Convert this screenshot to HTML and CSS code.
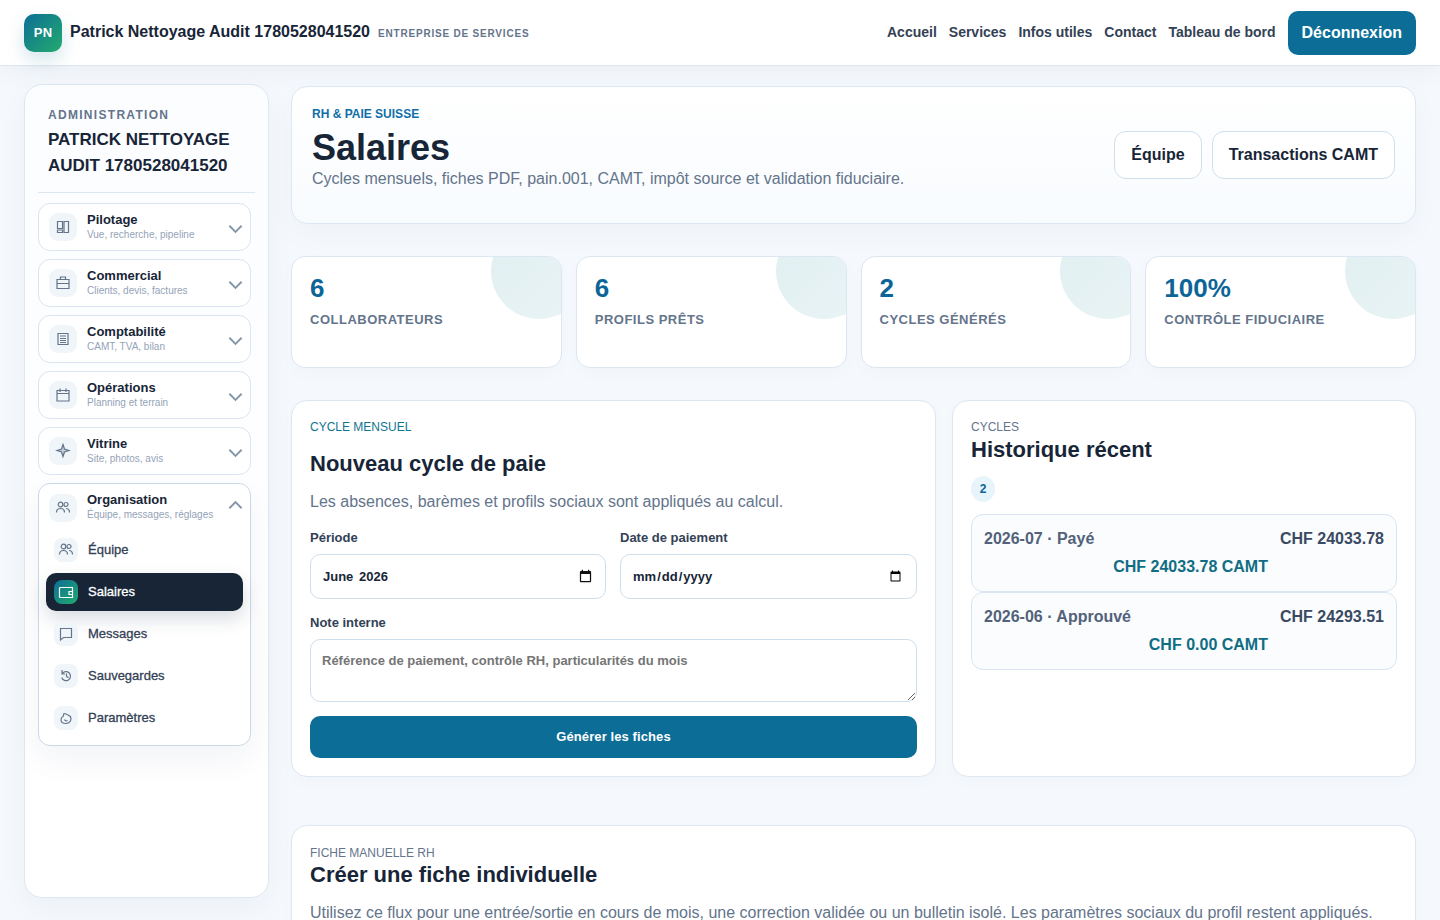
FILE: index.html
```html
<!DOCTYPE html>
<html lang="fr">
<head>
    <meta charset="UTF-8">
    <title>Salaires</title>
    <link rel="stylesheet" href="styles.css">
</head>
<body>
    <header class="topbar">
        <div class="brand">
            <span class="brand-logo">PN</span>
            <span class="brand-name">Patrick Nettoyage Audit 1780528041520</span>
            <span class="brand-tag">Entreprise de services</span>
        </div>
        <nav class="topnav">
            <a href="#">Accueil</a>
            <a href="#">Services</a>
            <a href="#">Infos utiles</a>
            <a href="#">Contact</a>
            <a href="#">Tableau de bord</a>
            <a href="#" class="logout">Déconnexion</a>
        </nav>
    </header>

    <div class="shell">
        <aside class="sidebar">
            <div class="side-head">
                <div class="side-kicker">Administration</div>
                <div class="side-title">Patrick Nettoyage Audit 1780528041520</div>
            </div>

            <div class="side-groups">
                <div class="group">
                    <div class="group-head">
                        <span class="group-icon">
                            <svg viewBox="0 0 16 16"><path d="M2.500 2.500h5v7h-5zM2.500 11h5v2.500h-5zM9 2.500h4.500v11H9z"/></svg>
                        </span>
                        <span class="group-text"><b>Pilotage</b><small>Vue, recherche, pipeline</small></span>
                        <svg class="chevron" viewBox="0 0 16 10"><path d="M1.500 1.500L8 8l6.500-6.500"/></svg>
                    </div>
                </div>
                <div class="group">
                    <div class="group-head">
                        <span class="group-icon">
                            <svg viewBox="0 0 16 16"><path d="M2 4.500h12v9H2zM5.500 4.500V2h5v2.500M2 8.500h12"/></svg>
                        </span>
                        <span class="group-text"><b>Commercial</b><small>Clients, devis, factures</small></span>
                        <svg class="chevron" viewBox="0 0 16 10"><path d="M1.500 1.500L8 8l6.500-6.500"/></svg>
                    </div>
                </div>
                <div class="group">
                    <div class="group-head">
                        <span class="group-icon">
                            <svg viewBox="0 0 16 16"><path d="M3 2.500h10v11H3zM5 5h6M5 7.500h6M5 9.500h6M5 11.500h6"/></svg>
                        </span>
                        <span class="group-text"><b>Comptabilité</b><small>CAMT, TVA, bilan</small></span>
                        <svg class="chevron" viewBox="0 0 16 10"><path d="M1.500 1.500L8 8l6.500-6.500"/></svg>
                    </div>
                </div>
                <div class="group">
                    <div class="group-head">
                        <span class="group-icon">
                            <svg viewBox="0 0 16 16"><path d="M2 3.500h12V14H2zM2 6.500h12M5 1.500V5M11 1.500V5"/></svg>
                        </span>
                        <span class="group-text"><b>Opérations</b><small>Planning et terrain</small></span>
                        <svg class="chevron" viewBox="0 0 16 10"><path d="M1.500 1.500L8 8l6.500-6.500"/></svg>
                    </div>
                </div>
                <div class="group">
                    <div class="group-head">
                        <span class="group-icon">
                            <svg class="star" viewBox="0 0 16 16"><path d="M8 1.500L9.500 6 14 7.500 9.500 9 8 13.500 6.500 9 2 7.500 6.500 6z"/></svg>
                        </span>
                        <span class="group-text"><b>Vitrine</b><small>Site, photos, avis</small></span>
                        <svg class="chevron" viewBox="0 0 16 10"><path d="M1.500 1.500L8 8l6.500-6.500"/></svg>
                    </div>
                </div>

                <div class="group group-open">
                    <div class="group-head">
                        <span class="group-icon">
                            <svg viewBox="0 0 16 16"><circle cx="5.500" cy="4.500" r="2.300"/><circle cx="11" cy="4.500" r="2"/><path d="M1.500 12.500c0-2.500 1.800-4 4-4s4 1.500 4 4M11 8.500c2 0 3.500 1.500 3.500 4"/></svg>
                        </span>
                        <span class="group-text"><b>Organisation</b><small>Équipe, messages, réglages</small></span>
                        <svg class="chevron" viewBox="0 0 16 10"><path d="M1.500 8.500L8 2l6.500 6.500"/></svg>
                    </div>
                    <div class="sub-list">
                        <a href="#" class="sub-item">
                            <span class="sub-icon"><svg viewBox="0 0 16 16"><circle cx="5.500" cy="4.500" r="2.300"/><circle cx="11" cy="4.500" r="2"/><path d="M1.500 12.500c0-2.500 1.800-4 4-4s4 1.500 4 4M11 8.500c2 0 3.500 1.500 3.500 4"/></svg></span>
                            <span class="sub-label">Équipe</span>
                        </a>
                        <a href="#" class="sub-item active">
                            <span class="sub-icon"><svg viewBox="0 0 16 16"><path d="M14.500 3.500H2.500a1 1 0 0 0-1 1v8a1 1 0 0 0 1 1h12zM14.500 7.500H11v3h3.500z"/></svg></span>
                            <span class="sub-label">Salaires</span>
                        </a>
                        <a href="#" class="sub-item">
                            <span class="sub-icon"><svg viewBox="0 0 16 16"><path d="M2.500 2.500h11v9H5.500l-3 2.500z"/></svg></span>
                            <span class="sub-label">Messages</span>
                        </a>
                        <a href="#" class="sub-item">
                            <span class="sub-icon"><svg viewBox="0 0 16 16"><path d="M4 2v4h3M4 6a4.500 4.500 0 1 1-.3 3.500M8.500 5.500v3l2 1.200"/></svg></span>
                            <span class="sub-label">Sauvegardes</span>
                        </a>
                        <a href="#" class="sub-item">
                            <span class="sub-icon"><svg viewBox="0 0 16 16"><path d="M6 3.500C8 3.500 10 5 12.500 6.500c1 3 .5 6.500-4.500 7-3.500 0-5-1.500-5-3.500 0-1.800.8-3 2-3.500zM6.500 9.500a2 2 0 0 0 3 1"/></svg></span>
                            <span class="sub-label">Paramètres</span>
                        </a>
                    </div>
                </div>
            </div>
        </aside>

        <main class="content">
            <section class="hero">
                <div class="hero-text">
                    <div class="hero-kicker">RH &amp; Paie Suisse</div>
                    <h1>Salaires</h1>
                    <p>Cycles mensuels, fiches PDF, pain.001, CAMT, impôt source et validation fiduciaire.</p>
                </div>
                <div class="hero-actions">
                    <a href="#" class="btn-light">Équipe</a>
                    <a href="#" class="btn-light">Transactions CAMT</a>
                </div>
            </section>

            <section class="stats">
                <div class="stat"><strong>6</strong><span>Collaborateurs</span></div>
                <div class="stat"><strong>6</strong><span>Profils prêts</span></div>
                <div class="stat"><strong>2</strong><span>Cycles générés</span></div>
                <div class="stat"><strong>100%</strong><span>Contrôle fiduciaire</span></div>
            </section>

            <section class="panels">
                <form class="panel">
                    <div class="eyebrow teal">Cycle mensuel</div>
                    <h2 class="form-title">Nouveau cycle de paie</h2>
                    <p class="panel-desc">Les absences, barèmes et profils sociaux sont appliqués au calcul.</p>
                    <div class="form-row">
                        <div class="field">
                            <label>Période</label>
                            <div class="month-box">
                                <span>June 2026</span>
                                <svg viewBox="0 0 24 24"><path d="M19 3h-1V1h-2v2H8V1H6v2H5c-1.100 0-2 .9-2 2v14c0 1.100.9 2 2 2h14c1.100 0 2-.9 2-2V5c0-1.100-.9-2-2-2zm0 16H5V8h14v11z"/></svg>
                            </div>
                        </div>
                        <div class="field">
                            <label for="paiement">Date de paiement</label>
                            <input type="date" id="paiement">
                        </div>
                    </div>
                    <div class="field">
                        <label for="note">Note interne</label>
                        <textarea id="note" placeholder="Référence de paiement, contrôle RH, particularités du mois"></textarea>
                    </div>
                    <button type="button" class="btn-primary">Générer les fiches</button>
                </form>

                <div class="panel">
                    <div class="eyebrow">Cycles</div>
                    <h2 class="list-title">Historique récent</h2>
                    <span class="badge">2</span>
                    <div class="cycle">
                        <span class="cycle-name">2026-07 · Payé</span>
                        <span class="cycle-total">CHF 24033.78</span>
                        <span class="cycle-camt">CHF 24033.78 CAMT</span>
                    </div>
                    <div class="cycle">
                        <span class="cycle-name">2026-06 · Approuvé</span>
                        <span class="cycle-total">CHF 24293.51</span>
                        <span class="cycle-camt">CHF 0.00 CAMT</span>
                    </div>
                </div>
            </section>

            <section class="panel manual">
                <div class="eyebrow">Fiche manuelle RH</div>
                <h2>Créer une fiche individuelle</h2>
                <p class="panel-desc">Utilisez ce flux pour une entrée/sortie en cours de mois, une correction validée ou un bulletin isolé. Les paramètres sociaux du profil restent appliqués.</p>
            </section>
        </main>
    </div>
</body>
</html>
```

FILE: styles.css
```css
* {
    box-sizing: border-box;
}
html, body {
    height: 100%;
    overflow: hidden;
}
body {
    margin: 0;
    font-family: "Liberation Sans", Arial, sans-serif;
    color: #172537;
    background: #f5f8fc;
}
a {
    color: inherit;
    text-decoration: none;
}

/* barre du haut */
.topbar {
    position: relative;
    height: 66px;
    display: flex;
    align-items: center;
    justify-content: space-between;
    padding: 0 24px;
    background: #ffffff;
    border-bottom: 1px solid #dde5ee;
    box-shadow: 0 8px 24px rgba(15, 40, 70, 0.04);
}
.brand {
    display: flex;
    align-items: center;
}
.brand-logo {
    width: 38px;
    height: 38px;
    display: flex;
    align-items: center;
    justify-content: center;
    border-radius: 10px;
    background: linear-gradient(135deg, #0e6e96, #22ab6e);
    box-shadow: 0 8px 18px rgba(15, 110, 150, 0.18);
    color: #ffffff;
    font-size: 13px;
    font-weight: 700;
    letter-spacing: 0.3px;
}
.brand-name {
    margin-left: 8px;
    padding-bottom: 2px;
    font-size: 16px;
    font-weight: 700;
}
.brand-tag {
    margin-left: 8px;
    margin-top: 2px;
    font-size: 10px;
    font-weight: 700;
    letter-spacing: 0.8px;
    text-transform: uppercase;
    color: #64748b;
}
.topnav {
    display: flex;
    align-items: center;
    gap: 12px;
    font-size: 14px;
    font-weight: 700;
    color: #334155;
}
.topnav a {
    padding-bottom: 2px;
}
.topnav .logout {
    height: 44px;
    display: flex;
    align-items: center;
    padding: 0 14px;
    border-radius: 10px;
    background: #0c6e96;
    color: #ffffff;
    font-size: 16px;
}

/* structure */
.shell {
    display: grid;
    grid-template-columns: 245px 1fr;
    column-gap: 22px;
    padding: 18px 24px 0;
}

/* menu lateral */
.sidebar {
    height: 814px;
    padding: 14px 17px 0 13px;
    background: linear-gradient(180deg, #fcfdff, #ffffff);
    border: 1px solid #dce7f2;
    border-radius: 18px;
    box-shadow: 0 10px 30px rgba(15, 40, 70, 0.04);
}
.side-head {
    margin-right: -4px;
    padding: 9px 10px 13px;
    border-bottom: 1px solid #dce7f2;
}
.side-kicker {
    font-size: 12px;
    font-weight: 700;
    letter-spacing: 1.3px;
    text-transform: uppercase;
    color: #64748b;
}
.side-title {
    margin-top: 5px;
    font-size: 17px;
    line-height: 26px;
    font-weight: 700;
    text-transform: uppercase;
}
.side-groups {
    display: flex;
    flex-direction: column;
    gap: 8px;
    margin-top: 10px;
}
.group {
    background: #ffffff;
    border: 1px solid #d9e5f0;
    border-radius: 12px;
}
.group-open {
    border-color: #c9d9e8;
    box-shadow: 0 14px 30px rgba(15, 40, 70, 0.05);
}
.group-head {
    height: 46px;
    display: flex;
    align-items: center;
    padding: 0 7px 0 10px;
}
.group-open .group-head {
    height: 47px;
}
.group-icon {
    width: 28px;
    height: 28px;
    flex: none;
    display: flex;
    align-items: center;
    justify-content: center;
    border-radius: 9px;
    background: #eff5f9;
}
.group-icon svg, .sub-icon svg {
    width: 16px;
    height: 16px;
    fill: none;
    stroke: #64748b;
    stroke-width: 1.2;
}
.group-icon .star {
    fill: #c3ced9;
}
.group-text {
    flex: 1;
    display: flex;
    flex-direction: column;
    margin-left: 10px;
    margin-top: -2px;
}
.group-text b {
    font-size: 13px;
    line-height: 15px;
    color: #172537;
}
.group-text small {
    margin-top: 1px;
    font-size: 10px;
    line-height: 13px;
    color: #94a3b8;
}
.chevron {
    width: 15px;
    height: 10px;
    flex: none;
    margin-top: 4px;
    fill: none;
    stroke: #8496aa;
    stroke-width: 2;
}
.group-open .chevron {
    margin-top: -5px;
}
.sub-list {
    display: flex;
    flex-direction: column;
    gap: 4px;
    padding: 0 7px 8px;
}
.sub-item {
    height: 38px;
    display: flex;
    align-items: center;
    gap: 10px;
    padding: 0 8px;
    border-radius: 10px;
    font-size: 13px;
    color: #334155;
    -webkit-text-stroke: 0.3px currentColor;
}
.sub-label {
    margin-top: -2px;
}
.sub-icon {
    width: 24px;
    height: 24px;
    flex: none;
    display: flex;
    align-items: center;
    justify-content: center;
    border-radius: 8px;
    background: #eff5f9;
}
.sub-item.active {
    background: #172537;
    color: #ffffff;
    box-shadow: 0 8px 18px rgba(15, 40, 70, 0.16);
}
.sub-item.active .sub-icon {
    background: linear-gradient(135deg, #0e6e96, #22ab6e);
}
.sub-item.active svg {
    stroke: #ffffff;
}

/* contenu */
.content {
    min-width: 0;
    padding-top: 2px;
}
.hero {
    height: 138px;
    display: flex;
    align-items: center;
    justify-content: space-between;
    padding: 0 20px;
    background: linear-gradient(180deg, #ffffff, #f8fbfe);
    border: 1px solid #dce7f2;
    border-radius: 16px;
    box-shadow: 0 10px 30px rgba(15, 40, 70, 0.03);
}
.hero-text {
    padding-bottom: 15px;
}
.hero-kicker {
    font-size: 12px;
    font-weight: 700;
    text-transform: uppercase;
    color: #0f6ea8;
}
.hero h1 {
    margin: 6px 0 0;
    font-size: 36px;
    line-height: 42px;
    font-weight: 700;
}
.hero p {
    margin: 0;
    font-size: 16px;
    line-height: 20px;
    color: #64748b;
}
.hero-actions {
    display: flex;
    gap: 10px;
}
.btn-light {
    height: 48px;
    display: flex;
    align-items: center;
    padding: 0 16px;
    background: #ffffff;
    border: 1px solid #cfe0ec;
    border-radius: 12px;
    font-size: 16px;
    font-weight: 700;
}
.stats {
    display: grid;
    grid-template-columns: repeat(4, 1fr);
    gap: 14px;
    margin-top: 32px;
}
.stat {
    position: relative;
    height: 112px;
    overflow: hidden;
    padding: 16px 18px;
    background: #ffffff;
    border: 1px solid #dce7f2;
    border-radius: 14px;
    box-shadow: 0 6px 18px rgba(15, 40, 70, 0.02);
}
.stat::after {
    content: "";
    position: absolute;
    top: -34px;
    right: -26px;
    width: 96px;
    height: 96px;
    border-radius: 50%;
    background: linear-gradient(135deg, #e1eff2, #e9f4f4);
}
.stat strong {
    display: block;
    font-size: 26px;
    line-height: 30px;
    color: #0c6597;
}
.stat span {
    display: block;
    margin-top: 9px;
    font-size: 13px;
    font-weight: 700;
    letter-spacing: 0.5px;
    text-transform: uppercase;
    color: #64748b;
}
.panels {
    display: grid;
    grid-template-columns: 645px 1fr;
    gap: 16px;
    margin-top: 32px;
}
.panel {
    display: block;
    padding: 18px;
    background: #ffffff;
    border: 1px solid #dce7f2;
    border-radius: 16px;
    box-shadow: 0 6px 18px rgba(15, 40, 70, 0.02);
}
.panels .panel {
    height: 377px;
}
.eyebrow {
    font-size: 12px;
    line-height: 16px;
    text-transform: uppercase;
    color: #64748b;
}
.eyebrow.teal {
    color: #0f7490;
}
.panel h2 {
    margin: 0;
    font-size: 22px;
    line-height: 28px;
    font-weight: 700;
}
.panel .form-title {
    margin-top: 15px;
}
.panel .list-title {
    margin-top: 1px;
}
.panel-desc {
    margin: 13px 0 0;
    font-size: 16px;
    line-height: 22px;
    color: #64748b;
}
.form-row {
    display: grid;
    grid-template-columns: 296px 1fr;
    gap: 14px;
    margin-top: 17px;
}
.field label {
    display: block;
    margin-bottom: 9px;
    font-size: 13px;
    line-height: 15px;
    font-weight: 700;
    color: #334155;
}
.field input, .field textarea, .month-box {
    display: block;
    width: 100%;
    padding: 0 12px;
    background: #ffffff;
    border: 1px solid #cfdeeb;
    border-radius: 10px;
    font-family: inherit;
    font-size: 13px;
    font-weight: 700;
    color: #172537;
}
.field input {
    height: 45px;
    padding-left: 11px;
}
.month-box {
    height: 45px;
    display: flex;
    align-items: center;
    justify-content: space-between;
    word-spacing: 2px;
}
.month-box svg {
    width: 15px;
    height: 15px;
    fill: #111111;
}
.form-row + .field {
    margin-top: 16px;
}
.field textarea {
    height: 63px;
    padding: 13px 11px 0;
}
.field textarea::placeholder {
    color: #757575;
}
.btn-primary {
    display: block;
    width: 100%;
    height: 42px;
    margin-top: 14px;
    padding-bottom: 2px;
    background: #0c6e96;
    border: none;
    border-radius: 10px;
    font-family: inherit;
    font-size: 13px;
    font-weight: 700;
    letter-spacing: 0.1px;
    color: #ffffff;
}
.badge {
    width: 24px;
    height: 26px;
    display: flex;
    align-items: center;
    justify-content: center;
    margin: 12px 0 12px;
    border-radius: 50%;
    background: #e8f4fb;
    font-size: 12px;
    font-weight: 700;
    color: #0c6597;
}
.cycle {
    display: grid;
    grid-template-columns: 1fr auto;
    column-gap: 12px;
    row-gap: 8px;
    height: 78px;
    padding: 14px 12px;
    background: #fbfcfe;
    border: 1px solid #d9e5f0;
    border-radius: 12px;
    font-size: 16px;
    line-height: 20px;
    font-weight: 700;
}
.cycle-name {
    color: #52627a;
}
.cycle-total {
    color: #3a4a62;
}
.cycle-camt {
    text-align: right;
    color: #0f6e84;
}
.manual {
    margin-top: 48px;
    height: 200px;
    padding-top: 19px;
}
.manual .panel-desc {
    margin-top: 13px;
}
```
